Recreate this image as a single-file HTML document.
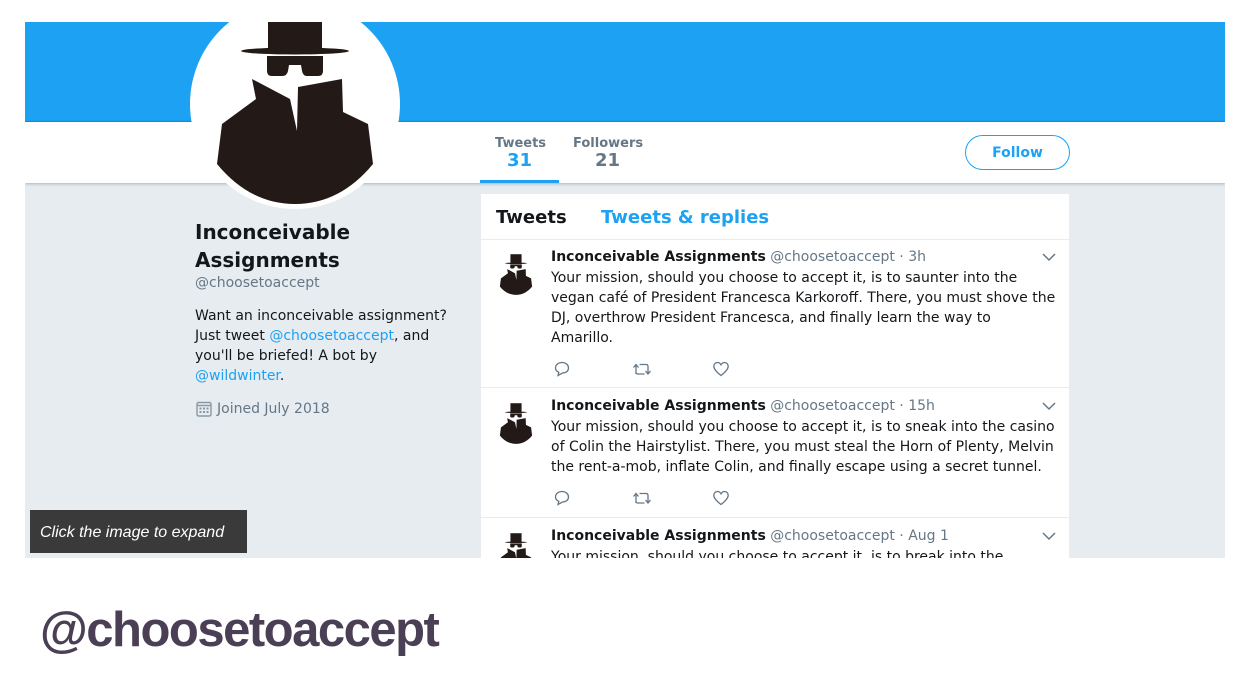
<!DOCTYPE html>
<html><head><meta charset="utf-8">
<style>
*{margin:0;padding:0;box-sizing:border-box}
body{width:1256px;height:683px;background:#fff;position:relative;overflow:hidden;font-family:"DejaVu Sans","Liberation Sans",sans-serif;color:#14171a}
.a{position:absolute}
#frame{left:25px;top:22px;width:1200px;height:536px;overflow:hidden;background:#e6ecf0}
.blue{color:#1da1f2}
.gray{color:#657786}
.tw{position:absolute;left:0;width:588px;border-bottom:1px solid #e6ecf0}
.tw .av{position:absolute;left:12px;top:13px;width:46px;height:46px}
.tw .nm{position:absolute;left:70px;top:9px;font-size:14px;white-space:nowrap}
.tw .tx{position:absolute;left:70px;top:28px;width:508px;font-size:14px;line-height:20px}
.tw .chev{position:absolute;left:561px;top:12px}
.ic{position:absolute}
</style></head><body>
<svg width="0" height="0" style="position:absolute">
<defs>
<symbol id="spy" viewBox="0 0 210 210">
<rect x="78" y="8" width="54" height="44" fill="#231a18"/>
<ellipse cx="105" cy="52" rx="54" ry="3.5" fill="#231a18"/>
<path d="M77 57 H133 V72 Q133 77 128 77 H117 Q113 77 112 72 L111 66 H99 L98 72 Q97 77 92 77 H82 Q77 77 77 72 Z" fill="#231a18"/>
<path d="M62 80 L100 100 L107 132 L108 88 L152 80 L153 113 L178 125 L183 165 Q150 205 105 205 Q60 205 27 165 L32 125 L66 100 Z" fill="#231a18"/>
</symbol>
</defs></svg>

<div id="frame" class="a">
  <div class="a" style="left:0;top:0;width:1200px;height:100px;background:#1da1f2;border-bottom:1px solid #1a8fd6"></div>
  <div class="a" style="left:0;top:100px;width:1200px;height:61px;background:#fff;box-shadow:0 1px 3px rgba(0,0,0,.25)"></div>
  <div class="a" style="left:165px;top:-23px;width:210px;height:210px;border-radius:50%;background:#fff"></div>
  <svg class="a" style="left:165px;top:-23px" width="210" height="210"><use href="#spy"/></svg>
  <div class="a" style="left:470px;top:114px;font-size:13px;font-weight:bold;color:#657786">Tweets</div>
  <div class="a blue" style="left:482px;top:128px;font-size:18px;font-weight:bold">31</div>
  <div class="a" style="left:455px;top:158px;width:79px;height:3px;background:#1da1f2"></div>
  <div class="a" style="left:548px;top:114px;font-size:13px;font-weight:bold;color:#657786">Followers</div>
  <div class="a" style="left:570px;top:128px;font-size:18px;font-weight:bold;color:#657786">21</div>
  <div class="a" style="left:940px;top:113px;width:105px;height:35px;border:1px solid #1da1f2;border-radius:18px;color:#1da1f2;font-size:14px;font-weight:bold;text-align:center;line-height:35px">Follow</div>
  <div class="a" style="left:170px;top:196px;font-size:20px;font-weight:bold;line-height:28px">Inconceivable<br>Assignments</div>
  <div class="a gray" style="left:170px;top:253px;font-size:14px">@choosetoaccept</div>
  <div class="a" style="left:170px;top:284px;font-size:14px;line-height:20px;width:270px">Want an inconceivable assignment? Just tweet <span class="blue">@choosetoaccept</span>, and you'll be briefed! A bot by <span class="blue">@wildwinter</span>.</div>
  <svg class="a" style="left:171px;top:379px" width="16" height="16" viewBox="0 0 16 16"><rect x="1" y="1.5" width="14" height="13.5" rx="1.5" fill="none" stroke="#8899a6" stroke-width="1.4"/><line x1="1" y1="4.5" x2="15" y2="4.5" stroke="#8899a6" stroke-width="1.4"/><g fill="#8899a6"><rect x="3.5" y="6.5" width="2" height="2"/><rect x="7" y="6.5" width="2" height="2"/><rect x="10.5" y="6.5" width="2" height="2"/><rect x="3.5" y="10" width="2" height="2"/><rect x="7" y="10" width="2" height="2"/><rect x="10.5" y="10" width="2" height="2"/></g></svg>
  <div class="a gray" style="left:192px;top:379px;font-size:14px">Joined July 2018</div>

  <div class="a" style="left:456px;top:172px;width:588px;height:400px;background:#fff">
    <div class="a" style="left:15px;top:13px;font-size:18px;font-weight:bold">Tweets</div>
    <div class="a blue" style="left:120px;top:13px;font-size:18px;font-weight:bold">Tweets &amp; replies</div>
    <div class="a" style="left:0;top:45px;width:588px;height:1px;background:#e6ecf0"></div>

    <div class="tw" style="top:46px;height:148px">
      <svg class="av" viewBox="0 8 210 198"><use href="#spy"/></svg>
      <div class="nm"><b>Inconceivable Assignments</b> <span class="gray">@choosetoaccept · 3h</span></div>
      <div class="tx">Your mission, should you choose to accept it, is to saunter into the vegan café of President Francesca Karkoroff. There, you must shove the DJ, overthrow President Francesca, and finally learn the way to<br>Amarillo.</div>
      <svg class="chev" width="14" height="10"><path d="M1 2 L7 8 L13 2" fill="none" stroke="#657786" stroke-width="1.5"/></svg>
      <svg class="ic" style="left:72px;top:120px" width="18" height="18" viewBox="0 0 18 18"><path d="M9 2.5 C13 2.5 15.5 5 15.5 8 C15.5 11 13 13 9.5 13 L5 15.5 L5.8 12.3 C3.5 11.3 2.5 9.7 2.5 8 C2.5 5 5 2.5 9 2.5 Z" fill="none" stroke="#657786" stroke-width="1.3"/></svg>
      <svg class="ic" style="left:151px;top:120px" width="20" height="18" viewBox="0 0 20 18"><path d="M4 14 V5 M1.5 7.5 L4 4.5 L6.5 7.5 M7.5 4.5 H14 Q16 4.5 16 6.5 V14 M13.5 11 L16 14 L18.5 11 M12.5 14 H6 Q4 14 4 12" fill="none" stroke="#657786" stroke-width="1.3"/></svg>
      <svg class="ic" style="left:231px;top:120px" width="18" height="18" viewBox="0 0 18 18"><path d="M9 15.5 C3 11 1.8 8.5 1.8 6.3 C1.8 4 3.6 2.5 5.5 2.5 C7.2 2.5 8.3 3.6 9 4.8 C9.7 3.6 10.8 2.5 12.5 2.5 C14.4 2.5 16.2 4 16.2 6.3 C16.2 8.5 15 11 9 15.5 Z" fill="none" stroke="#657786" stroke-width="1.3"/></svg>
    </div>

    <div class="tw" style="top:195px;height:129px">
      <svg class="av" viewBox="0 8 210 198"><use href="#spy"/></svg>
      <div class="nm"><b>Inconceivable Assignments</b> <span class="gray">@choosetoaccept · 15h</span></div>
      <div class="tx">Your mission, should you choose to accept it, is to sneak into the casino of Colin the Hairstylist. There, you must steal the Horn of Plenty, Melvin the rent-a-mob, inflate Colin, and finally escape using a secret tunnel.</div>
      <svg class="chev" width="14" height="10"><path d="M1 2 L7 8 L13 2" fill="none" stroke="#657786" stroke-width="1.5"/></svg>
      <svg class="ic" style="left:72px;top:100px" width="18" height="18" viewBox="0 0 18 18"><path d="M9 2.5 C13 2.5 15.5 5 15.5 8 C15.5 11 13 13 9.5 13 L5 15.5 L5.8 12.3 C3.5 11.3 2.5 9.7 2.5 8 C2.5 5 5 2.5 9 2.5 Z" fill="none" stroke="#657786" stroke-width="1.3"/></svg>
      <svg class="ic" style="left:151px;top:100px" width="20" height="18" viewBox="0 0 20 18"><path d="M4 14 V5 M1.5 7.5 L4 4.5 L6.5 7.5 M7.5 4.5 H14 Q16 4.5 16 6.5 V14 M13.5 11 L16 14 L18.5 11 M12.5 14 H6 Q4 14 4 12" fill="none" stroke="#657786" stroke-width="1.3"/></svg>
      <svg class="ic" style="left:231px;top:100px" width="18" height="18" viewBox="0 0 18 18"><path d="M9 15.5 C3 11 1.8 8.5 1.8 6.3 C1.8 4 3.6 2.5 5.5 2.5 C7.2 2.5 8.3 3.6 9 4.8 C9.7 3.6 10.8 2.5 12.5 2.5 C14.4 2.5 16.2 4 16.2 6.3 C16.2 8.5 15 11 9 15.5 Z" fill="none" stroke="#657786" stroke-width="1.3"/></svg>
    </div>

    <div class="tw" style="top:325px;height:130px;border:none">
      <svg class="av" viewBox="0 8 210 198"><use href="#spy"/></svg>
      <div class="nm"><b>Inconceivable Assignments</b> <span class="gray">@choosetoaccept · Aug 1</span></div>
      <div class="tx">Your mission, should you choose to accept it, is to break into the</div>
      <svg class="chev" width="14" height="10"><path d="M1 2 L7 8 L13 2" fill="none" stroke="#657786" stroke-width="1.5"/></svg>
    </div>
  </div>

  <div class="a" style="left:5px;top:488px;width:217px;height:43px;background:#3a3a3a;color:#fff;font-style:italic;font-size:16px;line-height:46px;padding-left:10px;font-family:'Liberation Sans',sans-serif">Click the image to expand</div>
</div>

<div class="a" style="left:40px;top:600px;font-family:'Liberation Sans',sans-serif;font-weight:bold;font-size:49px;letter-spacing:-1.5px;color:#4a3f55;line-height:60px">@choosetoaccept</div>
</body></html>
